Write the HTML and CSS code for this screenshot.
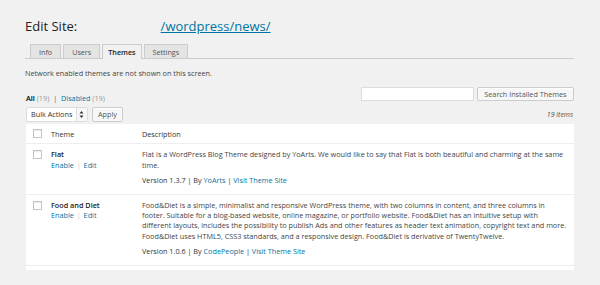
FILE: index.html
```html
<!DOCTYPE html>
<html>
<head>
<meta charset="utf-8">
<link rel="stylesheet" href="styles.css">
</head>
<body>
<div class="wrap">
  <h2 class="title">Edit Site: <a class="site-link" href="#">/wordpress/news/</a></h2>
  <div class="tabs">
    <span class="tab">Info</span>
    <span class="tab">Users</span>
    <span class="tab active">Themes</span>
    <span class="tab">Settings</span>
  </div>
  <p class="notice">Network enabled themes are not shown on this screen.</p>
  <div class="filter-row">
    <div class="subsubsub">
      <b class="current">All</b> <span class="count">(19)</span> <span class="sep">|</span> <a class="link" href="#">Disabled</a> <span class="count">(19)</span>
    </div>
    <div class="search">
      <span class="search-input"></span>
      <span class="btn search-btn">Search Installed Themes</span>
    </div>
  </div>
  <div class="nav-row">
    <div class="actions">
      <span class="select"><span class="select-text">Bulk Actions</span><span class="select-arrow"><svg width="9" height="13" viewBox="0 0 9 13"><path d="M2.5 5.5 L4.5 3 L6.5 5.5 Z M2.5 7.5 L4.5 10 L6.5 7.5 Z" fill="#333"/></svg></span></span>
      <span class="btn">Apply</span>
    </div>
    <span class="items">19 items</span>
  </div>
  <div class="table">
    <div class="row head">
      <div class="cb"><span class="box"></span></div>
      <div class="name">Theme</div>
      <div class="desc">Description</div>
    </div>
    <div class="row">
      <div class="cb"><span class="box"></span></div>
      <div class="name"><strong>Flat</strong><div class="row-actions"><a class="link" href="#">Enable</a> <span class="sep-light">|</span> <a class="link" href="#">Edit</a></div></div>
      <div class="desc">
        <p class="d-text">Flat is a WordPress Blog Theme designed by YoArts. We would like to say that Flat is both beautiful and charming at the same time.</p>
        <p class="d-meta">Version 1.3.7 | By <a class="link" href="#">YoArts</a> | <a class="link" href="#">Visit Theme Site</a></p>
      </div>
    </div>
    <div class="row">
      <div class="cb"><span class="box"></span></div>
      <div class="name"><strong>Food and Diet</strong><div class="row-actions"><a class="link" href="#">Enable</a> <span class="sep-light">|</span> <a class="link" href="#">Edit</a></div></div>
      <div class="desc">
        <p class="d-text">Food&amp;Diet is a simple, minimalist and responsive WordPress theme, with two columns in content, and three columns in footer. Suitable for a blog-based website, online magazine, or portfolio website. Food&amp;Diet has an intuitive setup with different layouts, includes the possibility to publish Ads and other features as header text animation, copyright text and more. Food&amp;Diet uses HTML5, CSS3 standards, and a responsive design. Food&amp;Diet is derivative of TwentyTwelve.</p>
        <p class="d-meta">Version 1.0.6 | By <a class="link" href="#">CodePeople</a> | <a class="link" href="#">Visit Theme Site</a></p>
      </div>
    </div>
  </div>
</div>
</body>
</html>
```

FILE: styles.css
```css
html, body {
  margin: 0;
  padding: 0;
  background: #f1f1f1;
}
body {
  font-family: "Open Sans", "Liberation Sans", sans-serif;
  font-size: 7.25px;
  color: #444;
  line-height: 10.4px;
}
.wrap {
  padding: 0 26px 0 25px;
}
.title {
  margin: 0;
  padding-top: 18px;
  font-size: 13px;
  line-height: 17px;
  font-weight: 400;
  color: #222;
}
.site-link {
  color: #0074a2;
  margin-left: 80px;
  text-decoration: underline;
}
.tabs {
  margin-top: 8px;
  padding-left: 5px;
  display: flex;
  gap: 2px;
  border-bottom: 1px solid #ccc;
  height: 15px;
  align-items: flex-end;
}
.tab {
  display: block;
  height: 14px;
  box-sizing: border-box;
  line-height: 14px;
  padding: 0 8px;
  background: #e4e4e4;
  border: 1px solid #ccc;
  border-bottom: none;
  color: #555;
  font-size: 7.2px;
}
.tab.active {
  background: #f1f1f1;
  color: #222;
  font-weight: 600;
  height: 15px;
  margin-bottom: -1px;
  padding: 0 5px;
}
.notice {
  margin: 9px 0 0;
}
.filter-row {
  margin-top: 9px;
  display: flex;
  justify-content: space-between;
  align-items: center;
  height: 14px;
}
.subsubsub {
  padding-left: 1px;
  padding-top: 8px;
}
.current {
  font-weight: 600;
  color: #000;
}
.count { color: #999; }
.sep { color: #666; padding: 0 2px; }
.sep-light { color: #ccc; padding: 0 1px; }
.link {
  color: #0074a2;
  text-decoration: none;
}
.search {
  display: flex;
  gap: 3px;
}
.search-input {
  display: block;
  width: 113px;
  height: 14px;
  box-sizing: border-box;
  background: #fff;
  border: 1px solid #ddd;
}
.btn {
  display: block;
  height: 14px;
  box-sizing: border-box;
  line-height: 12px;
  padding: 0 5px;
  background: #f7f7f7;
  border: 1px solid #ccc;
  border-radius: 2px;
  color: #555;
  box-shadow: 0 1px 0 #fff inset;
}
.search-btn { padding: 0 6.5px; }
.nav-row {
  margin-top: 6px;
  display: flex;
  justify-content: space-between;
  align-items: center;
  height: 15px;
  padding-left: 1px;
}
.actions {
  display: flex;
  gap: 4px;
  align-items: center;
}
.actions .btn { height: 15px; line-height: 13px; }
.select {
  display: flex;
  height: 15px;
  box-sizing: border-box;
  background: #fff;
  border: 1px solid #ddd;
  border-radius: 2px;
  color: #333;
  width: 62px;
}
.select-text {
  flex: 1;
  line-height: 13px;
  padding-left: 4px;
  white-space: nowrap;
  overflow: hidden;
}
.select-arrow {
  display: flex;
  width: 10px;
  border-left: 1px solid #ddd;
  background: #f7f7f7;
}
.items {
  font-style: italic;
  color: #555;
  font-size: 7px;
  padding-right: 1px;
}
.table {
  margin-top: 2px;
  margin-left: 1px;
  background: #fff;
  padding-bottom: 4px;
  box-shadow: 0 1px 1px rgba(0,0,0,0.04);
}
.row {
  display: grid;
  grid-template-columns: 25px 91px 1fr;
  border-bottom: 1px solid #eee;
  padding: 5px 0 8px;
}
.row.head {
  padding: 0;
  height: 19px;
  align-items: center;
  color: #333;
}
.row.head .box { margin-top: 0; }
.cb { padding-left: 7px; }
.box {
  display: block;
  width: 9px;
  height: 9px;
  box-sizing: border-box;
  border: 1px solid #c4c4c4;
  background: #fff;
  box-shadow: inset 0 1px 1px rgba(0,0,0,0.08);
  margin-top: 1px;
}
.name strong {
  font-weight: 600;
  color: #222;
}
.desc { padding-right: 7px; }
.d-text { margin: 0; }
.d-meta { margin: 5px 0 0; color: #333; }
```
